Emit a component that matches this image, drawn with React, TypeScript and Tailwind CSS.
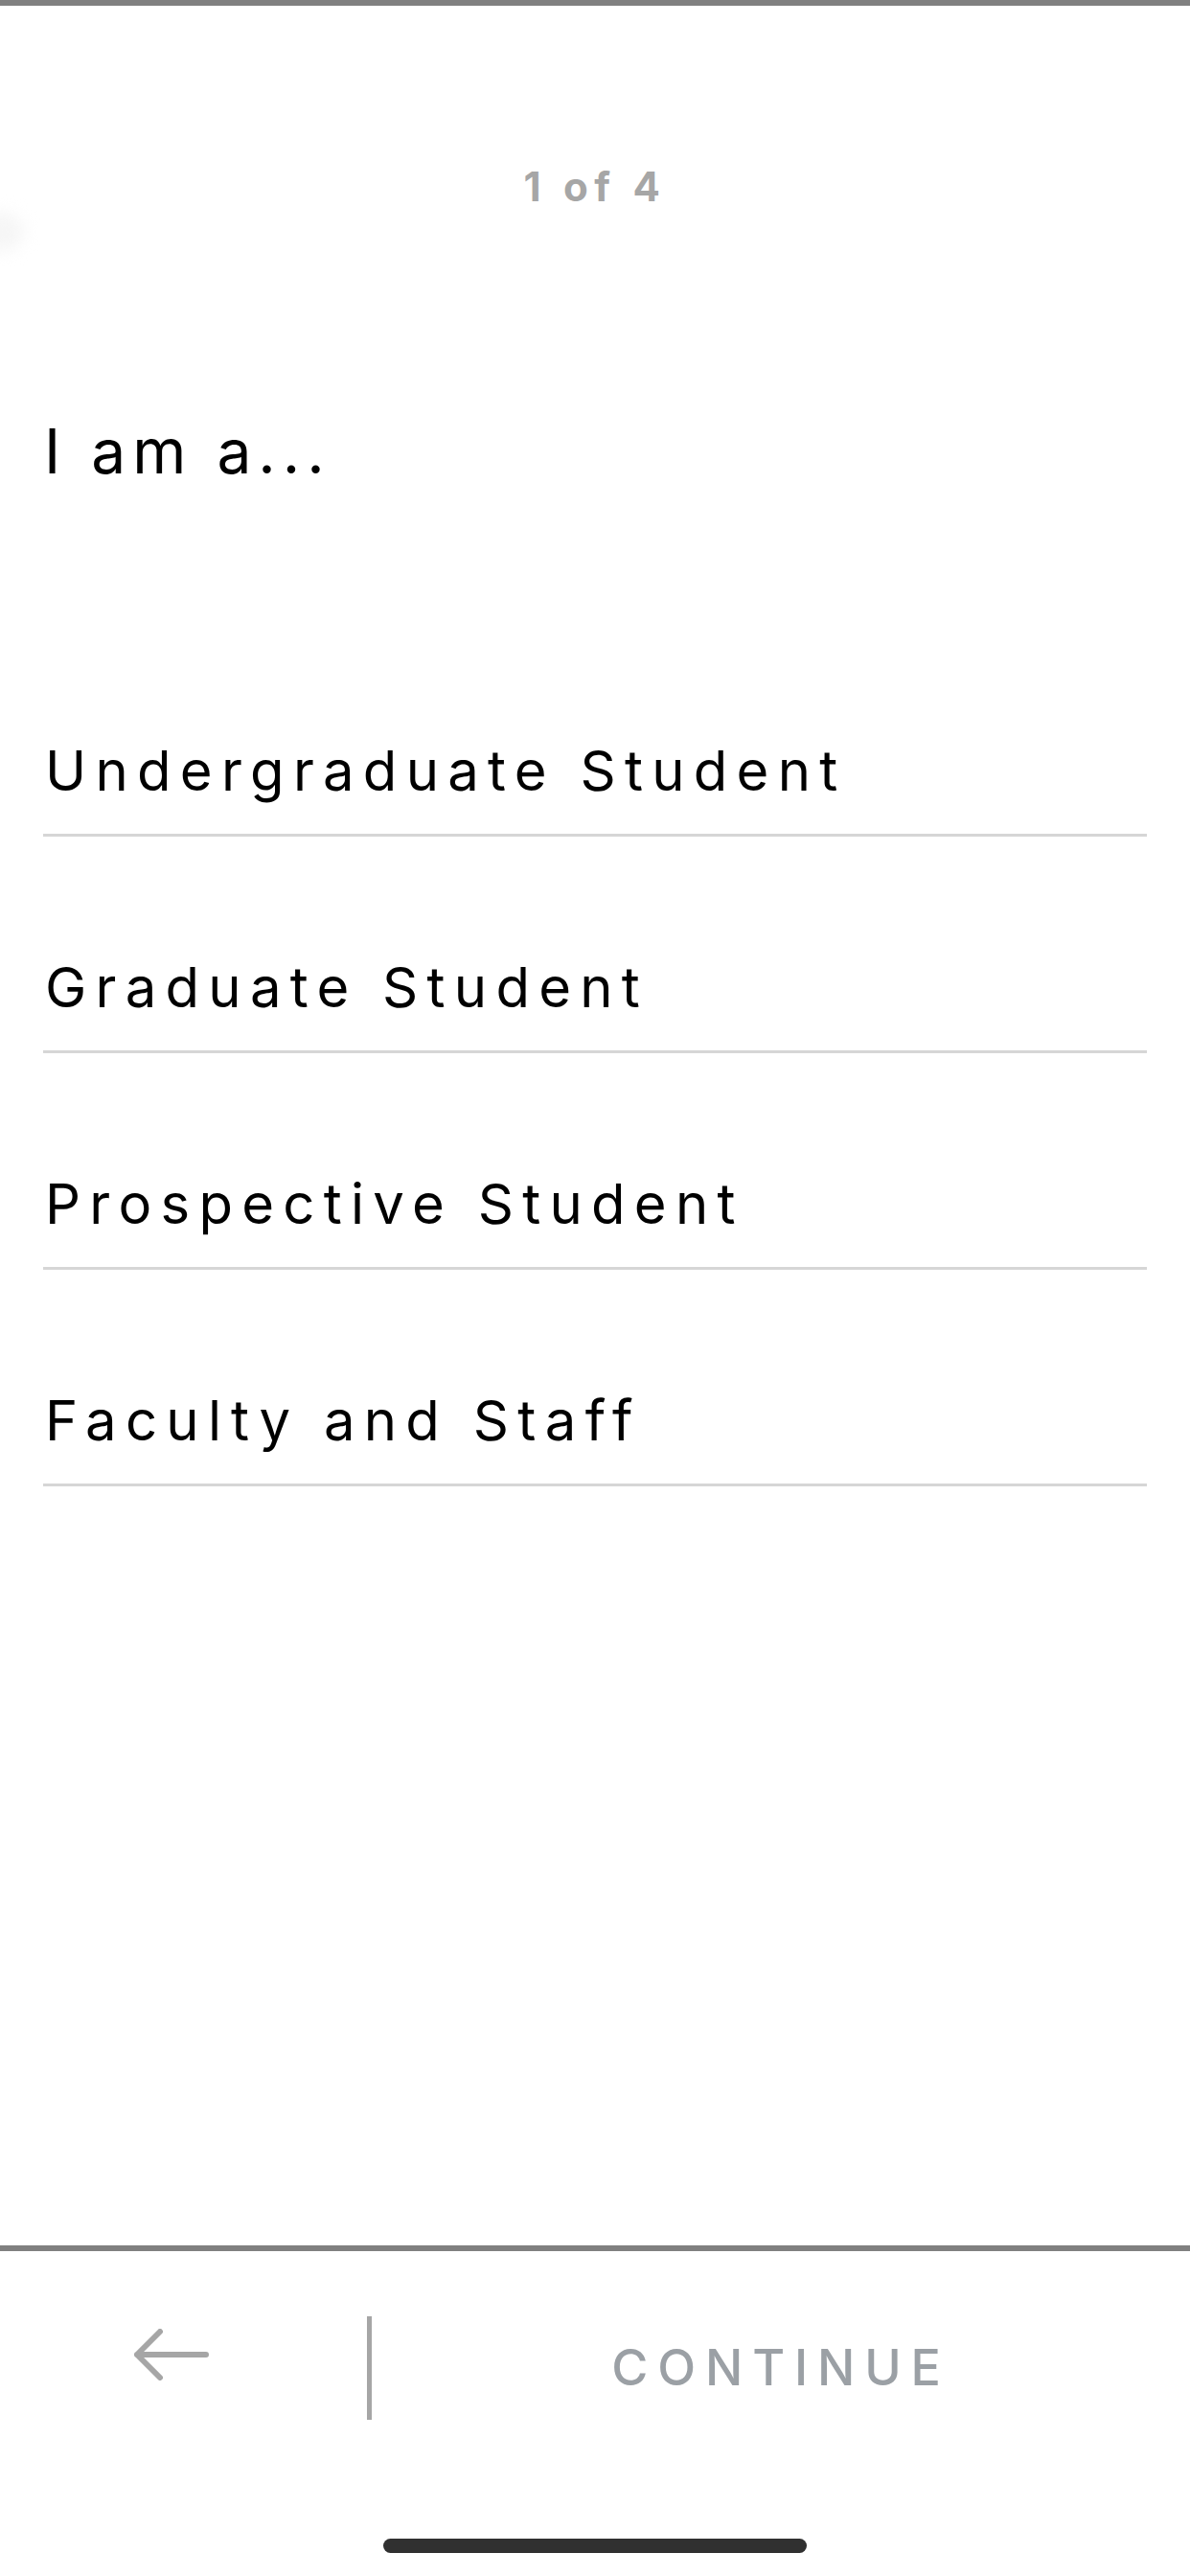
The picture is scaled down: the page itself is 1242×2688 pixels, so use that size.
import React from 'react'

const roles = ['Undergraduate Student', 'Graduate Student', 'Prospective Student', 'Faculty and Staff']

const BackArrow: React.FC = () => (
  <svg width="78" height="54" viewBox="0 0 78 54" fill="none" className="text-[#a6a6a6]">
    <path d="M3 27H75M27 3L3 27L27 51" stroke="currentColor" strokeWidth="6" strokeLinecap="round" strokeLinejoin="round" />
  </svg>
)

export default function App() {
  return (
    <div className="relative flex h-[2688px] w-[1242px] flex-col overflow-hidden bg-white font-['Inter','Noto_Sans',sans-serif]">
      <div className="h-[6px] w-full bg-[#808080]" />

      {/* faint edge blob under the status area */}
      <div className="absolute left-[-30px] top-[222px] h-[40px] w-[55px] rounded-full bg-[#f6f6f6] blur-[8px]" />

      <main className="flex-1">
        <p className="mt-[168px] text-center text-[42px] leading-[41px] font-bold tracking-[0.16em] text-[#a6a6a6]">
          1 of 4
        </p>

        <h1 className="mt-[224px] px-[46px] text-[64px] leading-[64px] font-normal tracking-[0.11em] text-black">
          I am a...
        </h1>

        <ul className="mt-[144px] px-[45px]">
          {roles.map((role) => (
            <li key={role} className="border-b-[3px] border-[#d6d6d6] pt-[128px] pb-[37px]">
              <span className="block pl-[2px] text-[58px] leading-[58px] font-normal tracking-[0.16em] text-black">
                {role}
              </span>
            </li>
          ))}
        </ul>
      </main>

      <footer className="flex h-[345px] flex-col border-t-[6px] border-[#808080]">
        <div className="mt-[68px] flex h-[108px] items-stretch">
          <div className="flex w-[383px] items-start pl-[140px] pt-[13px]">
            <BackArrow />
          </div>
          <div className="w-[5px] bg-[#a6a6a6]" />
          <div className="flex flex-1 items-center justify-center">
            <span className="text-[52px] leading-[52px] font-medium tracking-[0.19em] text-[#9ba0a5]">
              CONTINUE
            </span>
          </div>
        </div>
        <div className="mt-[124px] flex justify-center">
          <div className="h-[15px] w-[442px] rounded-full bg-[#303030]" />
        </div>
      </footer>
    </div>
  )
}
